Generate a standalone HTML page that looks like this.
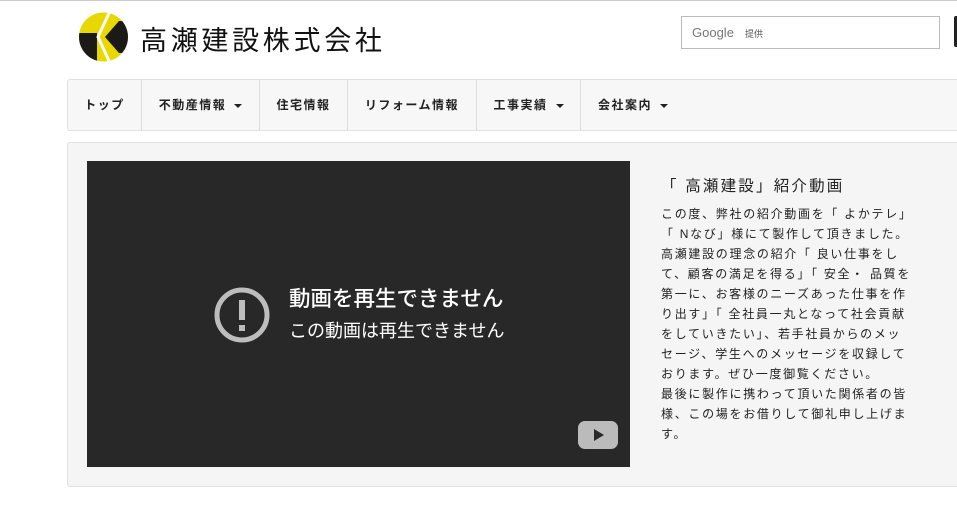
<!DOCTYPE html>
<html><head><meta charset="utf-8"><style>
*{margin:0;padding:0;box-sizing:border-box}
body{width:957px;height:515px;overflow:hidden;background:#fff;font-family:"Liberation Sans","Noto Sans CJK JP",sans-serif;position:relative;border-top:1px solid #ccc}
.abs{position:absolute}
.nav{left:67px;top:78px;width:900px;height:52px;background:#f7f7f7;border:1px solid #e0e0e0;border-radius:3px}
.nav div{position:absolute;top:0;height:50px;line-height:50px;font-size:12px;font-weight:bold;color:#222;letter-spacing:1.5px;text-align:center;border-right:1px solid #ddd}
.car{display:inline-block;width:0;height:0;border-left:4px solid transparent;border-right:4px solid transparent;border-top:4px solid #222;margin-left:8px;vertical-align:middle}
.panel{left:67px;top:141px;width:920px;height:345px;background:#f5f5f5;border:1px solid #e2e2e2;border-radius:3px}
.video{left:87px;top:160px;width:543px;height:306px;background:#282828}
.txt{left:661px;top:203px;font-size:12px;line-height:20px;color:#222;letter-spacing:1.7px;white-space:nowrap}
</style></head><body>
<svg class="abs" style="left:76px;top:8px" width="56" height="56" viewBox="0 0 56 56">
<defs><clipPath id="c"><circle cx="27.5" cy="28" r="24.5"/></clipPath></defs>
<circle cx="27.5" cy="28" r="24.5" fill="#e8d800"/>
<g clip-path="url(#c)">
<path d="M0 24 L21 24 L21 56 L0 56 Z" fill="#1b1a17"/>
<path d="M43 12 L29 28 L43 44 L56 44 L56 12 Z" fill="#1b1a17"/>
<path d="M34 2 L22 28 L34 54" fill="none" stroke="#fff" stroke-width="3"/>
</g>
</svg>
<div class="abs" style="left:140px;top:18px;font-size:27px;color:#111;letter-spacing:3.7px;font-family:'Noto Sans CJK JP',sans-serif">高瀬建設株式会社</div>
<div class="abs" style="left:681px;top:15px;width:259px;height:33px;border:1px solid #bbb;background:#fff"><span style="position:absolute;left:10px;top:8px;font-size:13px;color:#777">Google</span><span style="position:absolute;left:63px;top:10px;font-size:9px;color:#555">提供</span></div>
<div class="abs" style="left:954px;top:15px;width:5px;height:31px;background:#222;border-radius:2px"></div>
<div class="abs nav">
<div style="left:0;width:74px">トップ</div>
<div style="left:74px;width:118px">不動産情報<span class="car"></span></div>
<div style="left:192px;width:88px">住宅情報</div>
<div style="left:280px;width:129px">リフォーム情報</div>
<div style="left:409px;width:104px">工事実績<span class="car"></span></div>
<div style="left:513px;width:104px;border:none">会社案内<span class="car"></span></div>
</div>
<div class="abs panel"></div>
<div class="abs video">
<svg class="abs" style="left:127px;top:126px" width="56" height="56" viewBox="0 0 56 56"><circle cx="28" cy="28" r="25" fill="none" stroke="#bdbdbd" stroke-width="5"/><rect x="25" y="13" width="6" height="20" fill="#bdbdbd"/><rect x="25" y="38" width="6" height="6" fill="#bdbdbd"/></svg>
<div class="abs" style="left:202px;top:121px;font-size:21.5px;color:#fff;font-weight:500">動画を再生できません</div>
<div class="abs" style="left:202px;top:156px;font-size:18px;color:#fff">この動画は再生できません</div>
<svg class="abs" style="left:491px;top:260px" width="40" height="28" viewBox="0 0 40 28"><rect width="40" height="28" rx="7" fill="#bbb"/><path d="M16 8 L26 14 L16 20 Z" fill="#282828"/></svg>
</div>
<div class="abs" style="left:661px;top:173px;font-size:15.5px;color:#222;letter-spacing:2.2px">「 高瀬建設」紹介動画</div>
<div class="abs txt">この度、弊社の紹介動画を「 よかテレ」<br>「 Nなび」様にて製作して頂きました。<br>高瀬建設の理念の紹介「 良い仕事をし<br>て、顧客の満足を得る」「 安全・ 品質を<br>第一に、お客様のニーズあった仕事を作<br>り出す」「 全社員一丸となって社会貢献<br>をしていきたい」、若手社員からのメッ<br>セージ、学生へのメッセージを収録して<br>おります。ぜひ一度御覧ください。<br>最後に製作に携わって頂いた関係者の皆<br>様、この場をお借りして御礼申し上げま<br>す。</div>
</body></html>
